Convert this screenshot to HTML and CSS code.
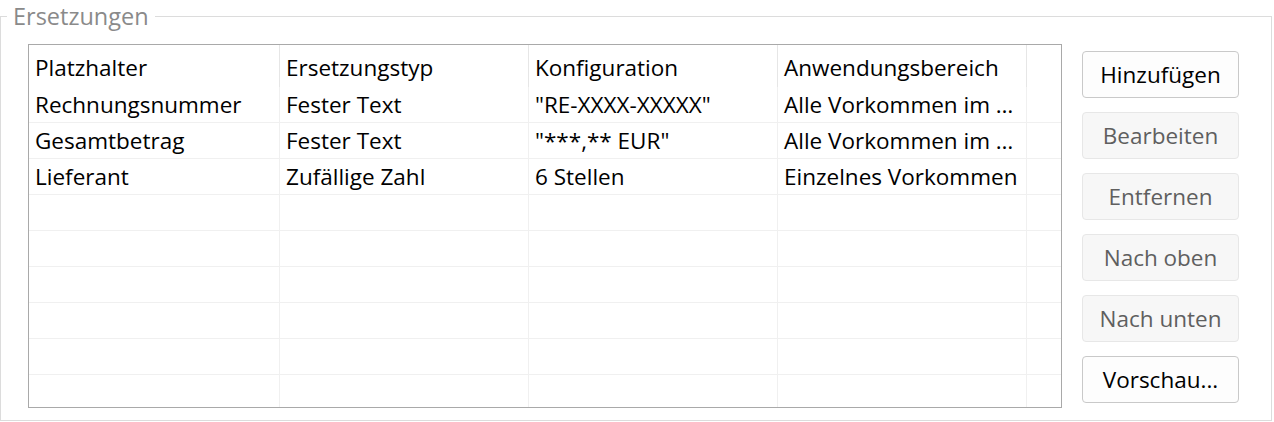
FILE: index.html
```html
<!DOCTYPE html>
<html lang="de">
<head>
<meta charset="utf-8">
<title>Ersetzungen</title>
<link rel="stylesheet" href="styles.css">
</head>
<body>
<fieldset class="group">
  <legend class="group-title">Ersetzungen</legend>
  <div class="group-body">
    <div class="grid">
      <table class="table">
        <colgroup>
          <col class="c1"><col class="c2"><col class="c3"><col class="c4"><col class="c5">
        </colgroup>
        <thead>
          <tr><th>Platzhalter</th><th>Ersetzungstyp</th><th>Konfiguration</th><th>Anwendungsbereich</th><th class="filler"></th></tr>
        </thead>
        <tbody>
          <tr><td>Rechnungsnummer</td><td>Fester Text</td><td>"RE-XXXX-XXXXX"</td><td>Alle Vorkommen im …</td><td class="filler"></td></tr>
          <tr><td>Gesamtbetrag</td><td>Fester Text</td><td>"***,** EUR"</td><td>Alle Vorkommen im …</td><td class="filler"></td></tr>
          <tr><td>Lieferant</td><td>Zufällige Zahl</td><td>6 Stellen</td><td>Einzelnes Vorkommen</td><td class="filler"></td></tr>
          <tr><td></td><td></td><td></td><td></td><td class="filler"></td></tr>
          <tr><td></td><td></td><td></td><td></td><td class="filler"></td></tr>
          <tr><td></td><td></td><td></td><td></td><td class="filler"></td></tr>
          <tr><td></td><td></td><td></td><td></td><td class="filler"></td></tr>
          <tr><td></td><td></td><td></td><td></td><td class="filler"></td></tr>
          <tr><td></td><td></td><td></td><td></td><td class="filler"></td></tr>
        </tbody>
      </table>
    </div>
    <div class="buttons">
      <button class="btn">Hinzufügen</button>
      <button class="btn" disabled>Bearbeiten</button>
      <button class="btn" disabled>Entfernen</button>
      <button class="btn" disabled>Nach oben</button>
      <button class="btn" disabled>Nach unten</button>
      <button class="btn">Vorschau...</button>
    </div>
  </div>
</fieldset>
</body>
</html>
```
FILE: styles.css
```css
html, body {
  margin: 0;
  padding: 0;
  background: #ffffff;
}

body {
  font-family: "Open Sans", "Noto Sans", sans-serif;
  font-size: 22.5px;
  color: #000;
}

.group {
  box-sizing: border-box;
  width: 1272px;
  margin: 0;
  padding: 0;
  border: 1px solid #dcdcdc;
  min-width: 0;
}

.group-title {
  margin-left: 6px;
  padding: 0 6px;
  font-size: 23.5px;
  line-height: 32px;
  color: #8a8a8a;
}

.group-body {
  display: flex;
  gap: 20px;
  padding: 12px 32px 12px 27px;
}

.grid {
  box-sizing: border-box;
  width: 1034px;
  height: 364px;
  border: 1px solid #a9a9a9;
  overflow: hidden;
  flex: none;
}

.table {
  border-collapse: separate;
  border-spacing: 0;
  table-layout: fixed;
  width: 1032px;
}

.c1 { width: 251px; }
.c2, .c3, .c4 { width: 249px; }
.c5 { width: 34px; }

.table th {
  box-sizing: border-box;
  height: 42px;
  padding: 3px 6px 0;
  line-height: 39px;
  font-weight: normal;
  text-align: left;
  white-space: nowrap;
  overflow: hidden;
  border-right: 1px solid #e6e6e6;
  vertical-align: top;
}

.table td {
  box-sizing: border-box;
  height: 36px;
  padding: 0 6px;
  line-height: 35px;
  white-space: nowrap;
  overflow: hidden;
  border-right: 1px solid #f0f0f0;
  border-bottom: 1px solid #f0f0f0;
  vertical-align: top;
}

.table .filler {
  border-right: none;
}

.buttons {
  display: flex;
  flex-direction: column;
  gap: 14px;
  padding-top: 7px;
  width: 157px;
  flex: none;
}

.btn {
  box-sizing: border-box;
  height: 47px;
  width: 157px;
  padding: 0;
  margin: 0;
  font: inherit;
  line-height: 45px;
  color: #000;
  background: #fdfdfd;
  border: 1px solid #c9c9c9;
  border-radius: 4px;
}

.btn:disabled {
  color: #5f5f5f;
  background: #f7f7f7;
  border-color: #e7e7e7;
}
```
